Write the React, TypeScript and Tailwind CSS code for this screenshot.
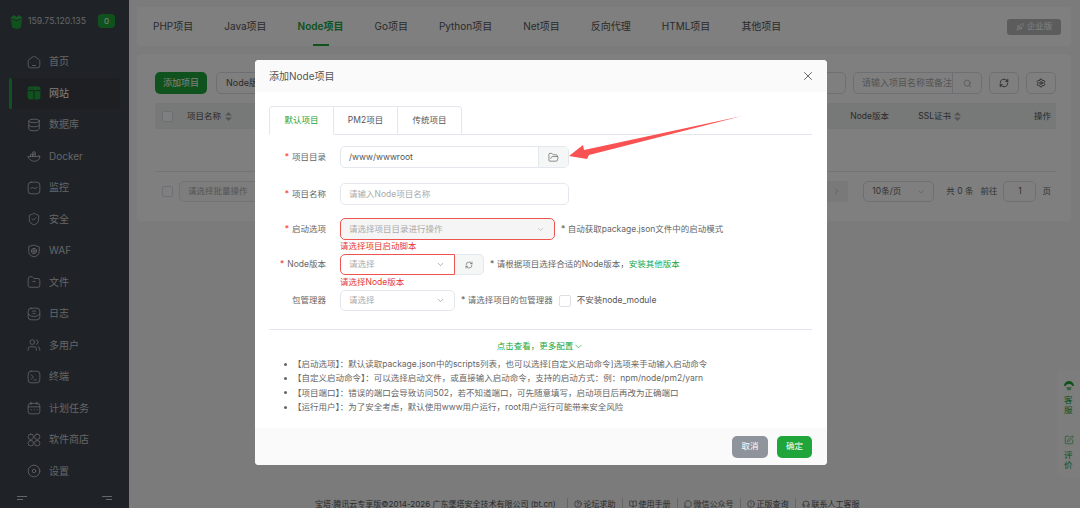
import React from "react";
import { BookOpen, ChevronDown, ChevronRight, CircleAlert, CircleHelp, Database, FolderOpen, Headphones, MessageCircle, RefreshCw, Rocket, Search, Settings, ShieldCheck, SquarePen, Users, X } from "lucide-react";

const ico = "w-[14px] h-[14px]";

function Svg({ children }: { children: React.ReactNode }) {
  return (
    <svg className={ico} viewBox="0 0 24 24" fill="none" stroke="currentColor" strokeWidth="1.4" strokeLinecap="round" strokeLinejoin="round">
      {children}
    </svg>
  );
}

const navItems: { name: string; icon: React.ReactNode }[] = [
  { name: "首页", icon: <Svg><path d="M2 11c0-2 1-3 3-4.500L10 3c1.500-1 2.500-1 4 0l5 3.500c2 1.500 3 2.500 3 4.500v7a4 4 0 0 1-4 4H6a4 4 0 0 1-4-4Z" /><path d="M9.500 18h5" /></Svg> },
  { name: "网站", icon: (
    <svg className={ico} viewBox="0 0 24 24">
      <rect x="1" y="1" width="22" height="22" rx="4" fill="#20a53a" />
      <path d="M1 8h22M12 8v15" stroke="#343a41" strokeWidth="1.6" />
      <path d="M5 4.500h1M9 4.500h1" stroke="#343a41" strokeWidth="1.4" />
    </svg>
  ) },
  { name: "数据库", icon: <Database className={ico} strokeWidth={1.4} /> },
  { name: "Docker", icon: <Svg><path d="M2 13h20c0 5-4 8-9 8s-10-3-11-8Z" /><path d="M22 13c0-1-1-2-2-2M6 13V9h4v4M10 13V9h4v4M10 9V5h4v4" /></Svg> },
  { name: "监控", icon: <Svg><rect x="2" y="2" width="20" height="20" rx="5" /><path d="M6.500 13c1.500-2.500 3-2.500 4.500-1s3 1.500 6.500-1.500" /></Svg> },
  { name: "安全", icon: <ShieldCheck className={ico} strokeWidth={1.4} /> },
  { name: "WAF", icon: <Svg><path d="M12 2 21 5v8c0 5-4 8-9 9-5-1-9-4-9-9V5Z" /><circle cx="12" cy="12" r="4.500" /><path d="M7.500 12h9M12 7.500v9" /></Svg> },
  { name: "文件", icon: <Svg><path d="M2 6a3 3 0 0 1 3-3h4l3 3h7a3 3 0 0 1 3 3v9a3 3 0 0 1-3 3H5a3 3 0 0 1-3-3Z" /><path d="M10 11h4" /></Svg> },
  { name: "日志", icon: <Svg><rect x="2" y="2" width="20" height="20" rx="5" /><path d="M2 12l6 4h8l6-4M9 7h6M10 11h4" /></Svg> },
  { name: "多用户", icon: <Users className={ico} strokeWidth={1.4} /> },
  { name: "终端", icon: <Svg><rect x="2" y="2" width="20" height="20" rx="5" /><path d="m7 8 4 4-4 4M12 17h4" /></Svg> },
  { name: "计划任务", icon: <Svg><rect x="2" y="4" width="20" height="18" rx="4" /><path d="M2 10h20M7 2v4M17 2v4M7 15h.5M12 15h.5M17 15h.5" /></Svg> },
  { name: "软件商店", icon: <Svg><rect x="2" y="2" width="9" height="9" rx="4" /><rect x="13" y="2" width="9" height="9" rx="4" /><rect x="2" y="13" width="9" height="9" rx="4" /><rect x="13" y="13" width="9" height="9" rx="4" /></Svg> },
  { name: "设置", icon: <Svg><circle cx="12" cy="12" r="10" /><circle cx="12" cy="12" r="3" /></Svg> },
];

const projectTabs = ["PHP项目", "Java项目", "Node项目", "Go项目", "Python项目", "Net项目", "反向代理", "HTML项目", "其他项目"];

const notes = [
  "【启动选项】：默认读取package.json中的scripts列表，也可以选择[自定义启动命令]选项来手动输入启动命令",
  "【自定义启动命令】：可以选择启动文件，或直接输入启动命令，支持的启动方式：例：npm/node/pm2/yarn",
  "【项目端口】：错误的端口会导致访问502，若不知道端口，可先随意填写，启动项目后再改为正确端口",
  "【运行用户】：为了安全考虑，默认使用www用户运行，root用户运行可能带来安全风险",
];

const footerLinks: { name: string; icon: React.ReactNode }[] = [
  { name: "论坛求助", icon: <CircleHelp className="w-[8px] h-[8px]" /> },
  { name: "使用手册", icon: <BookOpen className="w-[8px] h-[8px]" /> },
  { name: "微信公众号", icon: <MessageCircle className="w-[8px] h-[8px]" /> },
  { name: "正版查询", icon: <CircleAlert className="w-[8px] h-[8px]" /> },
  { name: "联系人工客服", icon: <Headphones className="w-[8px] h-[8px]" /> },
];

function SortArrows() {
  return (
    <svg className="w-[7px] h-[9px]" viewBox="0 0 7 9" fill="#a8a8a8">
      <path d="M3.500 0 7 3.500H0ZM3.500 9 0 5.500h7Z" />
    </svg>
  );
}

function Sidebar() {
  return (
    <aside className="w-[129px] shrink-0 h-full bg-[#3e444c] flex flex-col text-[#c8ccd0]">
      <div className="h-[46px] pt-[14px] pl-[10px] flex items-start">
        <svg className="w-[13px] h-[15px] shrink-0" viewBox="0 0 13 15">
          <path d="M1 5 6.500 7 12 5l-1 8.500-4.500 1.500L2 13.500Z" fill="#20a53a" />
          <path d="M0 4 4 1l2.500 2L9 1l4 3-6.500 2Z" fill="#2fb24a" />
        </svg>
        <span className="ml-[5px] text-[8.700px] leading-[14px] w-[70px] whitespace-nowrap">159.75.120.135</span>
        <span className="w-[17px] h-[14px] rounded-[4px] bg-[#20a53a] text-white text-[8px] leading-[14px] text-center">0</span>
      </div>
      <nav className="flex flex-col">
        {navItems.map((item) => (
          <div key={item.name} className={`relative h-[31.500px] flex items-center ml-[9px] mr-[9px] pl-[18px] ${item.name === "网站" ? "bg-[#3a3f46] text-white" : ""}`}>
            {item.name === "网站" && <span className="absolute left-0 top-0 bottom-0 w-[2.500px] rounded-full bg-[#20a53a]" />}
            {item.icon}
            <span className="ml-[8px] text-[10px] whitespace-nowrap">{item.name}</span>
          </div>
        ))}
      </nav>
      <div className="mt-[9px] pl-[17px] pr-[17px] flex justify-between">
        <div className="w-[10px] border-t border-[#c8ccd0] pt-[2px]"><div className="w-[6px] border-t border-[#c8ccd0]" /></div>
        <div className="w-[10px] border-t border-[#c8ccd0] pt-[2px]"><div className="w-[6px] ml-auto border-t border-[#c8ccd0]" /></div>
      </div>
    </aside>
  );
}

function Background() {
  return (
    <main className="flex-1 min-w-0 h-full bg-[#f6f7f7] pl-[8px] pr-[9px] pt-[7px] overflow-hidden">
      <div className="h-[39px] bg-white rounded-[4px] flex items-center pl-[16px] pr-[10px] text-[10px] text-[#555]">
        <div className="flex gap-[31px] h-full items-center">
          {projectTabs.map((t) => (
            <span key={t} className={`relative h-full flex items-center whitespace-nowrap ${t === "Node项目" ? "text-[#20a53a] font-semibold" : ""}`}>
              {t}
              {t === "Node项目" && <span className="absolute bottom-0 left-[15px] w-[16px] h-[2px] bg-[#20a53a]" />}
            </span>
          ))}
        </div>
        <div className="ml-auto w-[54px] h-[16px] rounded-[3px] bg-[#b8b8b8] text-white text-[8.500px] flex items-center justify-center gap-[3px]">
          <Rocket className="w-[8px] h-[8px]" />
          企业版
        </div>
      </div>

      <div className="mt-[8px] h-[167px] bg-white rounded-[4px] pt-[18px] pl-[18px] pr-[15px]">
        <div className="h-[22px] flex items-center">
          <button className="w-[52px] h-[22px] rounded-[5px] bg-[#20a53a] text-white text-[9px]">添加项目</button>
          <div className="ml-[9px] w-[630px] h-[22px] rounded-[5px] border border-[#dcdfe6] text-[9px] text-[#555] flex items-center pl-[9px]">Node版本</div>
          <div className="ml-[7px] w-[129px] h-[22px] rounded-[5px] border border-[#dcdfe6] text-[9px] text-[#aaa] flex items-center pl-[8px] whitespace-nowrap overflow-hidden">
            <span className="flex-1 overflow-hidden">请输入项目名称或备注</span>
            <span className="w-[29px] h-full border-l border-[#dcdfe6] flex items-center justify-center shrink-0"><Search className="w-[9px] h-[9px]" /></span>
          </div>
          <div className="ml-[7px] w-[30px] h-[22px] rounded-[5px] border border-[#dcdfe6] flex items-center justify-center text-[#444]"><RefreshCw className="w-[10px] h-[10px]" /></div>
          <div className="ml-[7px] w-[30px] h-[22px] rounded-[5px] border border-[#dcdfe6] flex items-center justify-center text-[#444]"><Settings className="w-[10px] h-[10px]" /></div>
        </div>

        <div className="mt-[9px] h-[26px] bg-[#eff1f1] flex items-center pl-[7px] text-[8.500px] text-[#555] relative">
          <span className="w-[11px] h-[11px] border border-[#dcdfe6] rounded-[2px] bg-white" />
          <span className="ml-[14px] mr-[4px]">项目名称</span>
          <SortArrows />
          <span className="ml-auto mr-[4px] w-[64px]">Node版本</span>
          <span className="mr-[3px]">SSL证书</span>
          <SortArrows />
          <span className="ml-[73px] mr-[5px]">操作</span>
        </div>

        <div className="mt-[42px] border-t border-[#e8e8e8] flex items-center pl-[7px] text-[8.500px] text-[#666] pt-[9px]">
          <span className="w-[11px] h-[11px] border border-[#dcdfe6] rounded-[2px] bg-white" />
          <div className="ml-[6px] w-[100px] h-[21px] rounded-[5px] bg-[#fafafa] border border-[#e6e6e6] text-[#aaa] flex items-center pl-[8px]">请选择批量操作</div>
          <div className="ml-auto w-[24px] h-[21px] bg-[#f3f3f3] flex items-center justify-center text-[#bbb]"><ChevronRight className="w-[9px] h-[9px]" /></div>
          <div className="ml-[15px] w-[71px] h-[21px] rounded-[5px] border border-[#dcdfe6] flex items-center justify-between pl-[8px] pr-[8px]">10条/页<ChevronDown className="w-[8px] h-[8px] text-[#bbb]" /></div>
          <span className="ml-[12px]">共 0 条</span>
          <span className="ml-[7px]">前往</span>
          <div className="ml-[6px] w-[33px] h-[21px] rounded-[5px] border border-[#dcdfe6] flex items-center justify-center">1</div>
          <span className="ml-[6px] mr-[5px]">页</span>
        </div>
      </div>

      <footer className="mt-[278px] pl-[178px] flex items-center h-[10px] whitespace-nowrap text-[8px] text-[#555]">
        <span className="mr-[11px]">宝塔·腾讯云专享版©2014-2026 广东堡塔安全技术有限公司 (bt.cn)</span>
        {footerLinks.map((l) => (
          <span key={l.name} className="flex items-center gap-[2px] pl-[6px] pr-[6px] border-l border-[#ccc]">
            {l.icon}
            {l.name}
          </span>
        ))}
      </footer>
    </main>
  );
}

function FormRow({ label, required, children, mb }: { label: string; required?: boolean; children: React.ReactNode; mb: string }) {
  return (
    <div className={`flex items-center ${mb}`}>
      <div className="w-[57px] text-right text-[8.500px] text-[#666] whitespace-nowrap">
        {required && <span className="text-[#ef4444] mr-[3px]">*</span>}
        {label}
      </div>
      <div className="ml-[14px] flex items-center">{children}</div>
    </div>
  );
}

function Dialog() {
  return (
    <div className="absolute left-[255px] top-[60px] w-[572px] h-[405px] bg-white rounded-[4px] flex flex-col overflow-hidden">
      <div className="h-[32px] shrink-0 bg-[#fafafa] flex items-center justify-between pl-[14px] pr-[12px]">
        <span className="text-[10px] text-[#555]">添加Node项目</span>
        <X className="w-[14px] h-[14px] text-[#555]" strokeWidth={1.5} />
      </div>

      <div className="flex-1 pl-[14px] pr-[15px] pt-[14px]">
        <div className="flex h-[29px] border-b border-[#e4e7ed]">
          <div className="w-[65px] h-[29px] border border-[#e4e7ed] border-b-white rounded-tl-[4px] text-[8.500px] text-[#20a53a] flex items-center justify-center">默认项目</div>
          <div className="w-[64px] h-[28px] border-t border-r border-[#e4e7ed] text-[8.500px] text-[#555] flex items-center justify-center">PM2项目</div>
          <div className="w-[64px] h-[28px] border-t border-r border-[#e4e7ed] rounded-tr-[4px] text-[8.500px] text-[#555] flex items-center justify-center">传统项目</div>
        </div>

        <div className="mt-[11px]">
          <FormRow label="项目目录" required mb="mb-[15px]">
            <div className="w-[229px] h-[22px] rounded-[5px] border border-[#e4e7ed] flex overflow-hidden text-[8.500px] text-[#555]">
              <div className="flex-1 flex items-center pl-[8px]">/www/wwwroot</div>
              <div className="w-[30px] bg-[#f5f7f7] border-l border-[#e4e7ed] flex items-center justify-center"><FolderOpen className="w-[11px] h-[11px]" strokeWidth={1.4} /></div>
            </div>
          </FormRow>
          <FormRow label="项目名称" required mb="mb-[13px]">
            <div className="w-[229px] h-[22px] rounded-[5px] border border-[#e4e7ed] flex items-center pl-[8px] text-[8.500px] text-[#aaa]">请输入Node项目名称</div>
          </FormRow>
          <FormRow label="启动选项" required mb="">
            <div className="w-[215px] h-[22px] rounded-[5px] border border-[#ef5350] bg-[#f5f5f5] flex items-center justify-between pl-[8px] pr-[9px] text-[8.500px] text-[#aaa]">
              请选择项目目录进行操作
              <ChevronDown className="w-[9px] h-[9px] text-[#bbb]" />
            </div>
            <span className="ml-[6px] text-[8.500px] text-[#666] whitespace-nowrap">* 自动获取package.json文件中的启动模式</span>
          </FormRow>
          <div className="ml-[71px] h-[14px] leading-[12px] text-[8.500px] text-[#e53935]">请选择项目启动脚本</div>
          <FormRow label="Node版本" required mb="">
            <div className="w-[115px] h-[21px] rounded-l-[5px] border border-[#ef5350] flex items-center justify-between pl-[8px] pr-[9px] text-[8.500px] text-[#aaa]">
              请选择
              <ChevronDown className="w-[9px] h-[9px] text-[#999]" />
            </div>
            <div className="w-[29px] h-[21px] rounded-r-[5px] border border-l-0 border-[#e4e7ed] bg-[#f5f7f7] flex items-center justify-center text-[#666]"><RefreshCw className="w-[8px] h-[8px]" /></div>
            <span className="ml-[6px] text-[8.500px] text-[#666] whitespace-nowrap">* 请根据项目选择合适的Node版本，<span className="text-[#20a53a]">安装其他版本</span></span>
          </FormRow>
          <div className="ml-[71px] h-[15px] leading-[14px] text-[8.500px] text-[#e53935]">请选择Node版本</div>
          <FormRow label="包管理器" mb="">
            <div className="w-[115px] h-[21px] rounded-[5px] border border-[#e4e7ed] flex items-center justify-between pl-[8px] pr-[9px] text-[8.500px] text-[#aaa]">
              请选择
              <ChevronDown className="w-[9px] h-[9px] text-[#999]" />
            </div>
            <span className="ml-[6px] text-[8.500px] text-[#666] whitespace-nowrap">* 请选择项目的包管理器</span>
            <span className="ml-[6px] w-[12px] h-[12px] rounded-[2px] border border-[#dcdfe6]" />
            <span className="ml-[6px] text-[8.500px] text-[#555] whitespace-nowrap">不安装node_module</span>
          </FormRow>
        </div>

        <div className="mt-[18px] border-t border-[#e4e7ed] pt-[7px] flex items-center justify-center text-[8.500px] text-[#20a53a] h-[27px]">
          点击查看，更多配置<ChevronDown className="w-[11px] h-[11px]" strokeWidth={1.5} />
        </div>
        <ul className="mt-[1px] pl-[15px] text-[8.500px] leading-[14.300px] text-[#666]">
          {notes.map((n) => (
            <li key={n} className="flex items-center whitespace-nowrap">
              <span className="w-[3px] h-[3px] rounded-full bg-[#666] mr-[6px] shrink-0" />
              {n}
            </li>
          ))}
        </ul>
      </div>

      <div className="h-[37px] shrink-0 bg-[#fafafa] flex items-center justify-end gap-[9px] pr-[15px]">
        <button className="w-[36px] h-[22px] rounded-[5px] bg-[#8f939c] text-white text-[8.500px]">取消</button>
        <button className="w-[35px] h-[22px] rounded-[5px] bg-[#20a53a] text-white text-[8.500px]">确定</button>
      </div>
    </div>
  );
}

export default function App() {
  return (
    <div className="relative w-[1080px] h-[508px] overflow-hidden flex font-[Inter,'Noto_Sans_CJK_SC',sans-serif]">
      <Sidebar />
      <Background />
      {/* side float */}
      <div className="absolute right-0 top-[370px] w-[23px] h-[107px] bg-[#fafafa] rounded-l-[5px] flex flex-col items-center pt-[11px] text-[#20a53a] text-[8.500px] leading-[10px]">
        <svg className="w-[10px] h-[10px]" viewBox="0 0 10 10">
          <path d="M0 5a5 5 0 0 1 10 0H8.500A3.500 3 0 0 0 5 3 3.500 3 0 0 0 1.500 5Z" fill="#20a53a" />
          <path d="M2.500 6h5a2.500 3.500 0 0 1-5 0Z" fill="#20a53a" opacity="0.6" />
        </svg>
        <span className="mt-[4px] w-[9px]">客服</span>
        <SquarePen className="mt-[20px] w-[10px] h-[10px]" strokeWidth={1.5} />
        <span className="mt-[5px] w-[9px]">评价</span>
      </div>
      {/* mask */}
      <div className="absolute inset-0 bg-black/50" />
      <Dialog />
      {/* red arrow */}
      <svg className="absolute left-[560px] top-[110px] w-[190px] h-[55px]" viewBox="0 0 190 55">
        <path d="M9 46 23 35 24 40 182 6 29 45 27 49Z" fill="#fa5252" />
      </svg>
    </div>
  );
}
